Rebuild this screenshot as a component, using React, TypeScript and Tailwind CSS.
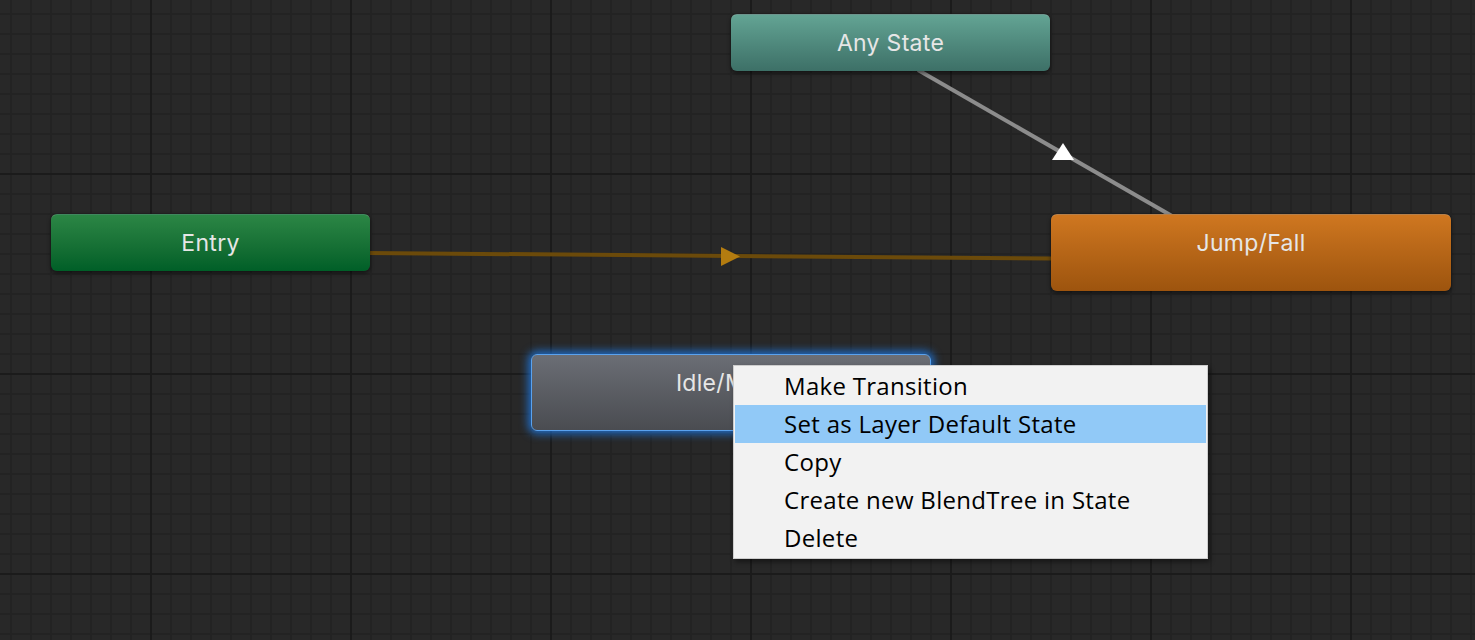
import React from 'react';

type NodeProps = {
    label: string;
    className: string;
    tall?: boolean;
    selected?: boolean;
};

// state node: label sits in the top 57px band, tall nodes keep the lower strip empty
const StateNode = ({ label, className, tall = false, selected = false }: NodeProps) => (
    <div
        className={`absolute rounded-[6px] border-t ${
            selected
                ? 'border border-[#5aa2ee] shadow-[0_0_8px_3px_rgba(30,125,235,0.8)]'
                : 'border-white/25 shadow-[0_2px_4px_rgba(0,0,0,0.55)]'
        } ${tall ? 'w-[400px] h-[77px]' : 'w-[319px] h-[57px]'} ${className}`}
    >
        <div className="h-[56px] flex items-center justify-center text-[23px] text-[#e6e6e6] font-['Inter',sans-serif] tracking-[0.3px]">
            {label}
        </div>
    </div>
);

const GraphLines = () => (
    <svg className="absolute inset-0" width="1475" height="640">
        <defs>
            <pattern id="minor" x="10" y="13" width="20" height="20" patternUnits="userSpaceOnUse">
                <rect x="0" y="0" width="2" height="20" fill="#232323" />
                <rect x="0" y="0" width="20" height="2" fill="#232323" />
            </pattern>
            <pattern id="major" x="150" y="173" width="200" height="200" patternUnits="userSpaceOnUse">
                <rect x="0" y="0" width="2" height="200" fill="#1b1b1b" />
                <rect x="0" y="0" width="200" height="2" fill="#1b1b1b" />
            </pattern>
        </defs>
        <rect width="1475" height="640" fill="url(#minor)" />
        <rect width="1475" height="640" fill="url(#major)" />

        {/* Entry -> Jump/Fall */}
        <line x1="368" y1="253" x2="1053" y2="258.5" stroke="#6b4a0a" strokeWidth="4" />
        <polygon points="721,247 740,256.5 721,266" fill="#b47c10" />

        {/* Any State -> Jump/Fall */}
        <line x1="918" y1="70" x2="1172" y2="216" stroke="#8c8c8c" strokeWidth="4" />
        <polygon points="1063,143 1074,160 1052,160" fill="#ffffff" />
    </svg>
);

const menuItems = [
    'Make Transition',
    'Set as Layer Default State',
    'Copy',
    'Create new BlendTree in State',
    'Delete',
];

const ContextMenu = () => (
    <div className="absolute left-[733px] top-[365px] w-[475px] bg-[#f2f2f2] border border-[#cdcdcd] p-[1px] shadow-[2px_3px_5px_rgba(0,0,0,0.45)]">
        {menuItems.map((item, i) => (
            <div
                key={item}
                className={`h-[38px] flex items-center pl-[49px] text-[24px] tracking-[0.3px] text-black font-['Open_Sans',sans-serif] ${
                    i === 1 ? 'bg-[#91c9f7]' : ''
                }`}
            >
                {item}
            </div>
        ))}
    </div>
);

export default function App() {
    return (
        <div className="relative w-[1475px] h-[640px] bg-[#282828] overflow-hidden">
            <GraphLines />

            <StateNode
                label="Any State"
                className="left-[731px] top-[14px] bg-linear-to-b from-[#63a494] to-[#3d7067]"
            />
            <StateNode
                label="Entry"
                className="left-[51px] top-[214px] bg-linear-to-b from-[#2b8645] to-[#005f28]"
            />
            <StateNode
                label="Jump/Fall"
                tall
                className="left-[1051px] top-[214px] bg-linear-to-b from-[#cf7720] to-[#9d540e]"
            />
            <StateNode
                label="Idle/Move"
                tall
                selected
                className="left-[531px] top-[354px] bg-linear-to-b from-[#6b6e75] to-[#4a4c51]"
            />

            <ContextMenu />
        </div>
    );
}
